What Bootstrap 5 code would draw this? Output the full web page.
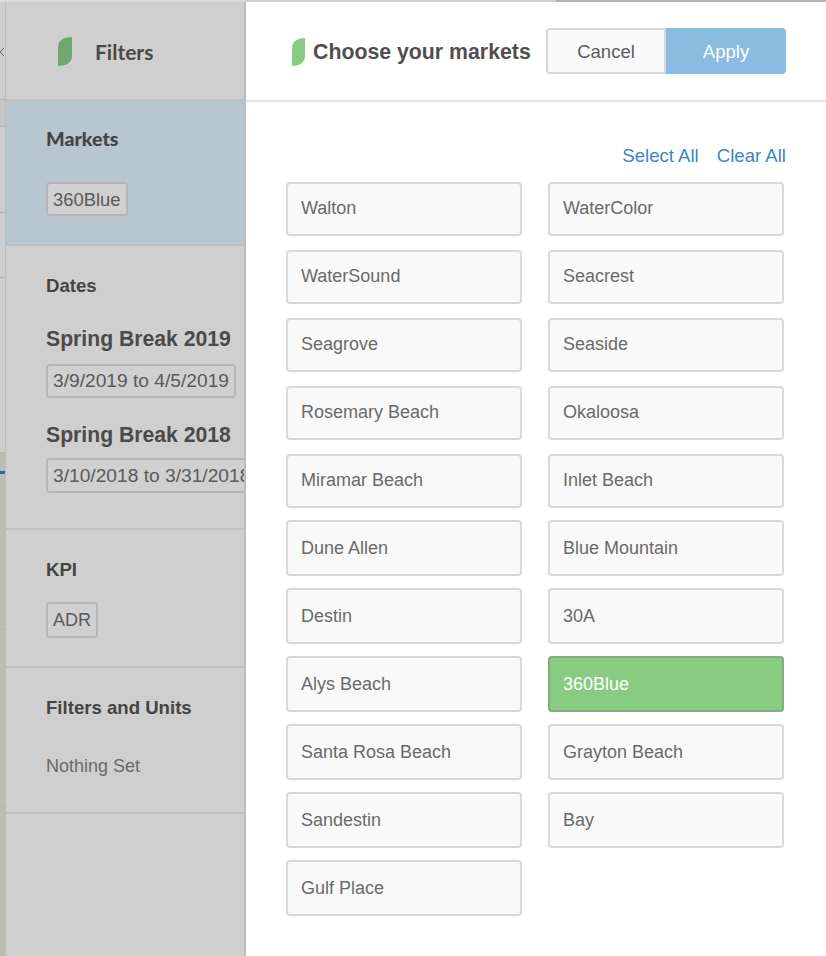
<!DOCTYPE html>
<html lang="en"><head><meta charset="utf-8">
<link href="https://cdn.jsdelivr.net/npm/bootstrap@5.3.0/dist/css/bootstrap.min.css" rel="stylesheet">
<style>
html,body{height:956px;overflow:hidden}
body{background:#fff;font-family:"Liberation Sans",Arial,sans-serif;color:#555}
.top-line{height:2px}
.top-a{width:246px;background:#d3dedb}
.top-b{width:310px;background:#d0d0d0}
.top-c{flex:1;background:#b4b4b4}
.stage{height:954px}
.edge-strip{width:6px;flex:none;border-right:1px solid #bdbdbd}
.edge-seg{border-bottom:1px solid #b4b4b4;background:#cdcdcd}
.seg-1{height:98px}
.seg-2{height:27px;background:#c3c5c6}
.seg-3{height:86px}
.seg-4{height:65px}
.seg-5{height:175px}
.seg-6{height:177px;background:#b9beb2}
.seg-7{height:177px;background:#b9beb2}
.seg-8{flex:1;background:#b9beb2;border:0}
.edge-glyph{display:block;margin-top:45px}
.edge-mark{height:3px;width:5px;background:#1a6fb0;margin-top:18px}
.side{width:240px;flex:none;background:#cfcfcf;border-right:2px solid #bcbcbc;overflow:hidden}
.side-head{height:100px;padding:2px 0 0 52px;gap:23px;border-bottom:3px solid #bfbfbf;font:700 21px Lato,sans-serif;color:#4a4a4a}
.sect{border-bottom:2px solid #bfbfbf;padding:0 0 0 40px}
.sect-markets{background:#b8c6cf;height:144px;padding-top:26px}
.sect-dates{height:284px;padding-top:29px}
.sect-kpi{height:138px;padding-top:29px}
.sect-units{height:146px;padding-top:29px}
.sect-title{font:700 18.6px/22px "Liberation Sans",sans-serif;color:#444;margin:0}
.sect-title-lato{font:900 19.6px/22px Lato,sans-serif}
.range-title{font:700 21.2px/26px "Liberation Sans",sans-serif;color:#4a4a4a;margin:0}
.range-first{margin-top:29px}
.range-next{margin-top:24px}
.tagbox{display:block;width:max-content;border:2px solid #b5b5b5;border-radius:4px;background:#d0d0d0;font-size:18.4px;line-height:30px;padding:0 5px;color:#5a5a5a;white-space:nowrap}
.tag-market{margin-top:32px;padding-top:1px;line-height:29px}
.tag-date{font-size:19.2px;margin-top:12px}
.tag-date-b{margin-top:10px;line-height:31px}
.tag-kpi{margin-top:21px;line-height:32px;font-size:18px}
.none-set{font-size:18px;line-height:27px;color:#6a6a6a;margin:34px 0 0}
.main-panel{width:580px;flex:none}
.panel-head{height:100px;border-bottom:2px solid #e6e6e6;padding:0 40px 0 46px}
.title-leaf{margin-top:2px}
.panel-title{font:700 21.3px "Liberation Sans",sans-serif;color:#4f4f4f;margin:3px 0 0 8px;white-space:nowrap}
.act-btn{width:120px;height:46px;font-size:18.5px;border-radius:4px 0 0 4px;background:#f9f9f9;border:2px solid #d8d8d8;color:#5c5c5c;padding:2px 0 0}
.act-apply{background:#8abce2;border:0;border-radius:0 4px 4px 0;color:#fff}
.links-row{padding:42px 40px 0 0;gap:18px;font-size:18.6px;line-height:24px}
.links-row a{color:#3f85c5;text-decoration:none}
.market-grid{display:grid;grid-template-columns:236px 236px;column-gap:26px;row-gap:14px;padding:14px 0 0 40px}
.market{height:54px;border:2px solid #d9d9d9;border-radius:4px;background:#f9f9f9;font-size:18px;color:#6a6a6a;text-align:left;padding:0 13px 2px}
.market:nth-child(n+11){height:56px;margin-top:-2px;padding-bottom:0}
.market-on{background:#88cb82;border-color:#7fae7c;color:#fff}
</style></head>
<body>
<div class="top-line d-flex"><div class="top-a"></div><div class="top-b"></div><div class="top-c"></div></div>
<div class="stage d-flex">
  <div class="edge-strip d-flex flex-column">
    <div class="edge-seg seg-1"><svg class="edge-glyph" width="5" height="10" viewBox="0 0 5 10"><path d="M4 1L0 5L4 9" fill="none" stroke="#666" stroke-width="1"/></svg></div>
    <div class="edge-seg seg-2"></div>
    <div class="edge-seg seg-3"></div>
    <div class="edge-seg seg-4"></div>
    <div class="edge-seg seg-5"></div>
    <div class="edge-seg seg-6"><div class="edge-mark"></div></div>
    <div class="edge-seg seg-7"></div>
    <div class="edge-seg seg-8"></div>
  </div>
  <aside class="side">
    <div class="side-head d-flex align-items-center">
      <svg width="14" height="29" viewBox="0 0 14 29"><path d="M14 0V19C14 25 9 29 0 29V10C0 4 5 0 14 0Z" fill="#6fa86c"/></svg>
      <span>Filters</span>
    </div>
    <section class="sect sect-markets">
      <h6 class="sect-title sect-title-lato">Markets</h6>
      <span class="tagbox tag-market">360Blue</span>
    </section>
    <section class="sect sect-dates">
      <h6 class="sect-title">Dates</h6>
      <h6 class="range-title range-first">Spring Break 2019</h6>
      <span class="tagbox tag-date">3/9/2019 to 4/5/2019</span>
      <h6 class="range-title range-next">Spring Break 2018</h6>
      <span class="tagbox tag-date tag-date-b">3/10/2018 to 3/31/2018</span>
    </section>
    <section class="sect sect-kpi">
      <h6 class="sect-title">KPI</h6>
      <span class="tagbox tag-kpi">ADR</span>
    </section>
    <section class="sect sect-units">
      <h6 class="sect-title">Filters and Units</h6>
      <p class="none-set">Nothing Set</p>
    </section>
  </aside>
  <main class="main-panel">
    <div class="panel-head d-flex align-items-center">
      <svg class="title-leaf" width="13" height="28" viewBox="0 0 13 28"><path d="M13 0V18C13 24 8 28 0 28V10C0 4 5 0 13 0Z" fill="#88cb82"/></svg>
      <h1 class="panel-title">Choose your markets</h1>
      <div class="ms-auto d-flex">
        <button class="btn act-btn" type="button">Cancel</button>
        <button class="btn act-btn act-apply" type="button">Apply</button>
      </div>
    </div>
    <div class="links-row d-flex justify-content-end">
      <a href="#">Select All</a><a href="#">Clear All</a>
    </div>
    <div class="market-grid">
      <button class="btn market" type="button">Walton</button>
      <button class="btn market" type="button">WaterColor</button>
      <button class="btn market" type="button">WaterSound</button>
      <button class="btn market" type="button">Seacrest</button>
      <button class="btn market" type="button">Seagrove</button>
      <button class="btn market" type="button">Seaside</button>
      <button class="btn market" type="button">Rosemary Beach</button>
      <button class="btn market" type="button">Okaloosa</button>
      <button class="btn market" type="button">Miramar Beach</button>
      <button class="btn market" type="button">Inlet Beach</button>
      <button class="btn market" type="button">Dune Allen</button>
      <button class="btn market" type="button">Blue Mountain</button>
      <button class="btn market" type="button">Destin</button>
      <button class="btn market" type="button">30A</button>
      <button class="btn market" type="button">Alys Beach</button>
      <button class="btn market market-on" type="button">360Blue</button>
      <button class="btn market" type="button">Santa Rosa Beach</button>
      <button class="btn market" type="button">Grayton Beach</button>
      <button class="btn market" type="button">Sandestin</button>
      <button class="btn market" type="button">Bay</button>
      <button class="btn market" type="button">Gulf Place</button>
    </div>
  </main>
</div>
<script src="https://cdn.jsdelivr.net/npm/bootstrap@5.3.0/dist/js/bootstrap.bundle.min.js"></script>
</body></html>
